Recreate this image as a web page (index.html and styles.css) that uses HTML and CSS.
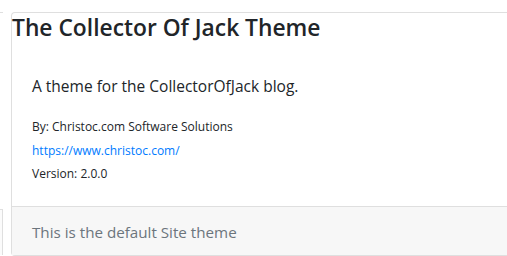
FILE: index.html
```html
<!DOCTYPE html>
<html lang="en">
<head>
    <meta charset="UTF-8">
    <meta name="viewport" content="width=device-width, initial-scale=1.0">
    <title>Themes</title>
    <link rel="stylesheet" href="styles.css">
</head>
<body>
    <div class="deck">
        <div class="card card-prev">
            <div class="card-body"></div>
            <div class="card-footer"></div>
        </div>
        <div class="card">
            <h4 class="card-title">The Collector Of Jack Theme</h4>
            <div class="card-body">
                <p class="card-text">A theme for the CollectorOfJack blog.</p>
                <p class="meta">By: Christoc.com Software Solutions</p>
                <p class="meta"><a href="https://www.christoc.com/">https://www.christoc.com/</a></p>
                <p class="meta">Version: 2.0.0</p>
            </div>
            <div class="card-footer">
                <span class="muted">This is the default Site theme</span>
            </div>
        </div>
    </div>
</body>
</html>
```

FILE: styles.css
```css
body {
    font-family: "Open Sans", "Noto Sans", sans-serif;
    color: #212529;
    background-color: #ffffff;
    margin: 0;
    overflow: hidden;
}
.deck {
    display: flex;
    gap: 8px;
    padding-top: 12px;
}
.card {
    display: flex;
    flex-direction: column;
    flex: 1;
    height: 242px;
    border: 1px solid #dfdfdf;
    border-right: none;
    border-radius: 4px 0 0 4px;
    background-color: #ffffff;
}
.card-prev {
    flex: 0 0 3px;
    min-width: 0;
    overflow: hidden;
    border-left: none;
    border-bottom: none;
    border-radius: 0;
}
.card-prev .card-body {
    padding: 0;
}
.card-prev .card-footer {
    background-color: #fbfbfb;
    border-right: 1px solid #dfdfdf;
    padding: 0;
    height: 46px;
}
.card-title {
    font-size: 22.8px;
    font-weight: 600;
    line-height: 30px;
    margin: 0;
    padding: 0;
}
.card-body {
    flex: 1;
    padding: 0 20px;
}
.card-text {
    font-size: 15.5px;
    margin: 31px 0 17px;
    line-height: 24px;
}
.meta {
    font-size: 12px;
    line-height: 23.5px;
    margin: 0;
}
.meta a {
    color: #007bff;
    text-decoration: none;
}
.card-footer {
    background-color: #f7f7f7;
    border-top: 1px solid #dfdfdf;
    padding: 13px 20px;
    height: 49px;
    box-sizing: border-box;
}
.muted {
    color: #6c757d;
    font-size: 15.2px;
    line-height: 24px;
}
```
